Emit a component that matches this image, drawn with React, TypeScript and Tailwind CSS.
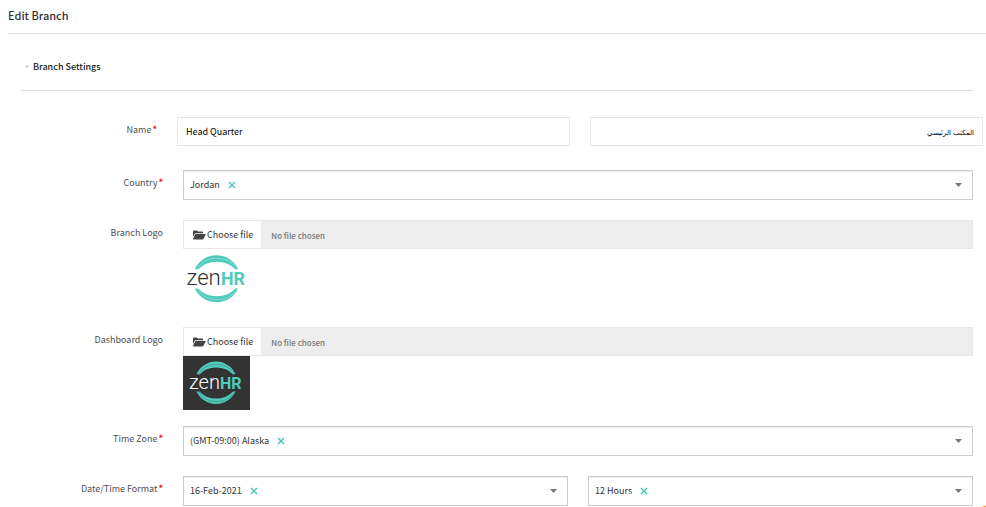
import type { ReactNode } from "react";
import { useRef } from "react";

const fontStack =
  "font-['Noto_Sans_CJK_SC','Source_Sans_Pro','Liberation_Sans',sans-serif]";

function FieldRow({
  label,
  htmlFor,
  required = false,
  children,
}: {
  label: string;
  htmlFor: string;
  required?: boolean;
  children: ReactNode;
}) {
  return (
    <div className="grid grid-cols-[142px_minmax(0,1fr)] gap-5">
      <label
        htmlFor={htmlFor}
        className="text-right text-[9px] leading-[26px] whitespace-nowrap text-[#505050]"
      >
        {label}
        {required && <span className="ml-px font-bold text-[#f00]">*</span>}
      </label>
      <div className="min-w-0">{children}</div>
    </div>
  );
}

function TagSelect({
  id,
  value,
  label,
}: {
  id: string;
  value: string;
  label?: string;
}) {
  const ref = useRef<HTMLSelectElement>(null);
  return (
    <div className="flex h-[30px] min-w-0 flex-1 items-center border border-[#ccc] bg-white pr-2.5 pl-1.5 shadow-[inset_0_1px_0_#eee]">
      <select
        ref={ref}
        id={id}
        aria-label={label}
        defaultValue={value}
        className="field-sizing-content appearance-none bg-transparent text-[9px] leading-4 text-[#333] outline-none"
      >
        <option>{value}</option>
      </select>
      <button
        type="button"
        aria-label={`Remove ${value}`}
        className="ml-2 flex size-2 items-center justify-center"
      >
        <svg viewBox="0 0 8 8" className="size-2" fill="none" stroke="#3cc8b4" strokeWidth="1.4">
          <path d="M1 1l6 6M7 1L1 7" />
        </svg>
      </button>
      <button
        type="button"
        aria-label="Show options"
        onClick={() => ref.current?.showPicker()}
        className="flex h-full flex-1 items-center justify-end"
      >
        <svg viewBox="0 0 7 4" className="h-1 w-[7px]" fill="#777">
          <path d="M0 0h7L3.5 4z" />
        </svg>
      </button>
    </div>
  );
}

function ZenLogo({ dark = false }: { dark?: boolean }) {
  return (
    <svg
      viewBox={dark ? "0 0 67 54" : "3 0 60 54"}
      role="img"
      aria-label="ZenHR"
      className={dark ? "block h-[54px] w-[67px] bg-[#333]" : "block h-[60px] w-[67px]"}
    >
      <g fill="#4fcbbd">
        <path d="M13.500 18A21.500 21.500 0 0 1 52.500 18L50 18.500A20 15.500 0 0 0 16.500 18.500Z" />
        <path d="M13.500 35.500A21.500 21.500 0 0 0 52.500 35.500L50 35.500A20 15.500 0 0 1 16.500 35.500Z" />
      </g>
      <g fill="none" stroke={dark ? "#333" : "#fff"} strokeWidth="0.4" opacity="0.7">
        <path d="M15.500 18A20.500 18.500 0 0 1 51.500 18" />
        <path d="M15.500 36A20.500 18.500 0 0 0 51.500 36" />
      </g>
      <text
        x="6"
        y="32.5"
        fontSize="20"
        className="font-['Roboto','Liberation_Sans',sans-serif] font-light"
        fill={dark ? "#fff" : "#333"}
      >
        zen
      </text>
      <text
        x="37"
        y="32.5"
        fontSize="16"
        className="font-['Roboto','Liberation_Sans',sans-serif] font-bold"
        fill="#4fcbbd"
      >
        HR
      </text>
    </svg>
  );
}

function FilePicker({ id }: { id: string }) {
  return (
    <div className="flex h-[29px] border border-[#e8e8e8] bg-[#ededed]">
      <input id={id} type="file" className="peer sr-only" />
      <label
        htmlFor={id}
        className="flex cursor-pointer items-center gap-px border-r border-[#e8e8e8] bg-white px-2 pt-px text-[9px] leading-4 text-[#333] peer-focus-visible:outline"
      >
        <svg viewBox="0 0 14 10" className="h-2.5 w-3.5" fill="#444">
          <path d="M1 1.200Q1 .4 1.800.4H4.600Q5.200.4 5.500 1L5.800 1.500H10.300Q11 1.500 11 2.300V3.200H3.700Q3 3.200 2.600 3.900L1 7z" />
          <path d="M4 4H13.200Q14 4 13.600 4.700L11.500 8.700Q11.100 9.400 10.300 9.400H1.500Q.7 9.400 1.100 8.700L3 4.700Q3.400 4 4 4z" />
        </svg>
        Choose file
      </label>
      <span className="px-[9px] text-[8px] leading-[29px] font-medium text-[#777]">
        No file chosen
      </span>
    </div>
  );
}

export default function App() {
  const inputClass =
    "h-[29px] w-full min-w-0 border border-[#e5e5e5] bg-white px-2 leading-4 text-black outline-none";
  return (
    <main className={`relative overflow-hidden bg-white ${fontStack}`}>
      <h1 className="ml-2 h-[34px] border-b border-[#ddd] text-[11px] leading-[30px] font-medium text-[#333]">
        Edit Branch
      </h1>
      <section className="pr-[13px] pl-[21px]">
        <h2 className="mt-2 h-[49px] border-b border-[#ddd]">
          <button
            type="button"
            className="flex h-[49px] items-center gap-1 pl-1 text-[9px] leading-4 font-medium text-[#222]"
          >
            <svg viewBox="0 0 4 3" className="h-[3px] w-1" fill="none" stroke="#999" strokeWidth="0.8">
              <path d="M.5.5L2 2.300L3.500.5" />
            </svg>
            Branch Settings
          </button>
        </h2>
        <form className="pt-[26px]">
          <div className="-mr-2.5 -ml-1.5">
            <FieldRow label="Name" htmlFor="name" required>
              <div className="flex gap-5">
                <input
                  id="name"
                  defaultValue="Head Quarter"
                  className={`${inputClass} text-[9px]`}
                />
                <input
                  aria-label="Name in Arabic"
                  dir="rtl"
                  defaultValue="المكتب الرئيسي"
                  className={`${inputClass} text-[7px]`}
                />
              </div>
            </FieldRow>
          </div>
          <div className="mt-6">
            <FieldRow label="Country" htmlFor="country" required>
              <TagSelect id="country" value="Jordan" />
            </FieldRow>
          </div>
          <div className="mt-5">
            <FieldRow label="Branch Logo" htmlFor="branch-logo">
              <FilePicker id="branch-logo" />
              <ZenLogo />
            </FieldRow>
          </div>
          <div className="mt-[18px]">
            <FieldRow label="Dashboard Logo" htmlFor="dashboard-logo">
              <FilePicker id="dashboard-logo" />
              <ZenLogo dark />
            </FieldRow>
          </div>
          <div className="mt-4">
            <FieldRow label="Time Zone" htmlFor="time-zone" required>
              <TagSelect id="time-zone" value="(GMT-09:00) Alaska" />
            </FieldRow>
          </div>
          <div className="mt-5">
            <FieldRow label="Date/Time Format" htmlFor="date-format" required>
              <div className="flex gap-5">
                <TagSelect id="date-format" value="16-Feb-2021" />
                <TagSelect id="time-format" value="12 Hours" label="Time format" />
              </div>
            </FieldRow>
          </div>
        </form>
      </section>
      <button
        type="button"
        aria-label="Help"
        className="fixed -right-[30px] -bottom-12 size-[50px] rounded-full bg-[#ffa500]"
      />
    </main>
  );
}
